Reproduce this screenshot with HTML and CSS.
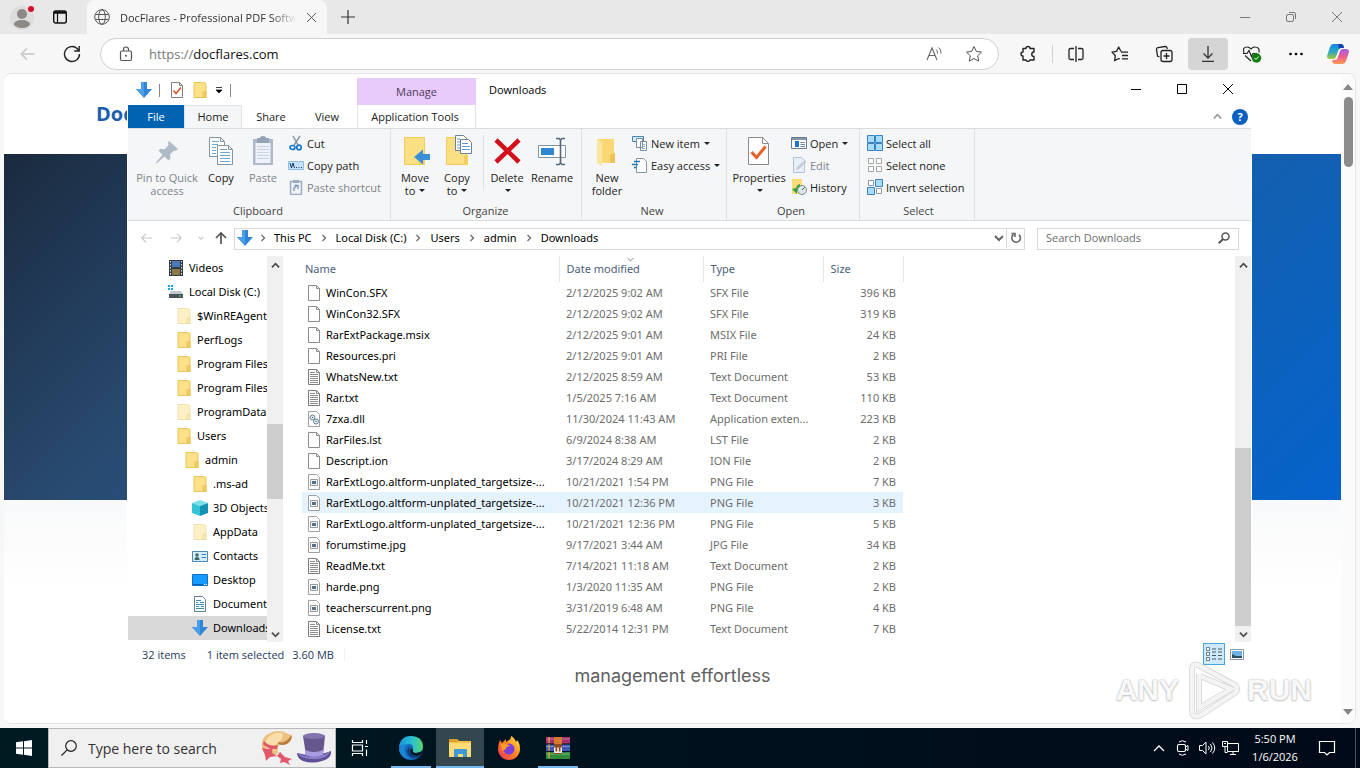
FILE: index.html
```html
<!DOCTYPE html>
<html lang="en">
<head>
    <meta charset="UTF-8">
    <title>Downloads</title>
    <link rel="stylesheet" href="styles.css">
</head>
<body>
    <!-- shared icons -->
    <svg class="sprite" aria-hidden="true">
        <symbol id="i-down" viewBox="0 0 16 16"><path d="M5 0h6v7h5l-8 9-8-9h5z" fill="#2f86d6"/><path d="M5 0h3v15L0 7h5z" fill="#4a9fe8"/></symbol>
        <symbol id="i-folder" viewBox="0 0 16 16"><path d="M2 .5h9l3 1v14H2z" fill="#fbe28a" stroke="#e8c65a"/><path d="M11 10l3-1v6.500h-3z" fill="#f3cf5c" stroke="#dcb545" stroke-width=".6"/></symbol>
        <symbol id="i-file" viewBox="0 0 16 16"><path d="M2.500 .5h8l3 3v12h-11z" fill="#fff" stroke="#8c8c8c"/><path d="M10.500 .5v3h3" fill="none" stroke="#8c8c8c"/></symbol>
        <symbol id="i-text" viewBox="0 0 16 16"><path d="M2.500 .5h8l3 3v12h-11z" fill="#fff" stroke="#7c7c7c"/><path d="M10.500 .5v3h3M4 3.500h5M4 5.500h8M4 7.500h8M4 9.500h8M4 11.500h8M4 13.500h8" fill="none" stroke="#8c8c8c"/></symbol>
        <symbol id="i-image" viewBox="0 0 16 16"><path d="M2.500 .5h8l3 3v12h-11z" fill="#fff" stroke="#a0a0a0"/><path d="M4.500 5.500h7v6h-7z" fill="#eef3fa" stroke="#9a9a9a"/><path d="M6 7h4v3H6z" fill="#59708a"/></symbol>
        <symbol id="i-dll" viewBox="0 0 16 16"><path d="M2.500 .5h8l3 3v12h-11z" fill="#fff" stroke="#a0a0a0"/><g fill="#dcecf2" stroke="#66828c"><circle cx="6.500" cy="6.500" r="2.500"/><circle cx="10" cy="10.500" r="2.500"/></g><path d="M6 6h1v1H6zM9.500 10h1v1h-1z" fill="#446"/></symbol>
        <symbol id="i-chev-up" viewBox="0 0 10 10"><path d="M1 7l4-4 4 4" fill="none" stroke="currentColor" stroke-width="2"/></symbol>
        <symbol id="i-chev-down" viewBox="0 0 10 10"><path d="M1 3l4 4 4-4" fill="none" stroke="currentColor" stroke-width="2"/></symbol>
        <symbol id="i-chev-right" viewBox="0 0 10 10"><path d="M3.500 2l3 3-3 3" fill="none" stroke="#6b6b6b" stroke-width="1.300"/></symbol>
        <symbol id="i-left" viewBox="0 0 16 16"><path d="M14 8H2M7 3L2 8l5 5" fill="none" stroke="currentColor" stroke-width="1.300"/></symbol>
        <symbol id="i-right" viewBox="0 0 16 16"><path d="M2 8h12M9 3l5 5-5 5" fill="none" stroke="currentColor" stroke-width="1.300"/></symbol>
        <symbol id="i-min" viewBox="0 0 10 10"><path d="M0 5.500h10" stroke="currentColor"/></symbol>
        <symbol id="i-close" viewBox="0 0 10 10"><path d="M0 0l10 10M10 0L0 10" stroke="currentColor"/></symbol>
        <symbol id="i-check-doc" viewBox="0 0 16 16"><path d="M2.500 .5h8l3 3v12h-11z" fill="#fff" stroke="#808080"/><path d="M10.500 .5v3h3" fill="none" stroke="#808080"/><path d="M4.500 8.500l2.500 3 5-6" fill="none" stroke="#d9532c" stroke-width="1.600"/></symbol>
    </svg>

    <main class="desktop">
        <section class="browser">
            <header class="tabbar">
                <button class="tab-btn profile" aria-label="Profile">
                    <svg width="28" height="28" viewBox="0 0 28 28"><circle cx="14" cy="15" r="12" fill="#dcdcdc"/><circle cx="14" cy="11" r="5" fill="#8d8986"/><ellipse cx="14" cy="21" rx="8" ry="4" fill="#8d8986"/><circle cx="23" cy="6" r="3" fill="#d60f26"/></svg>
                </button>
                <button class="tab-btn" aria-label="Tab actions">
                    <svg width="16" height="16" viewBox="0 0 16 16"><rect x="1.700" y="2" width="12.600" height="12" rx="2" fill="none" stroke="#111" stroke-width="1.400"/><path d="M2 3.500h12" stroke="#111" stroke-width="2.500"/><path d="M5.500 4v10" stroke="#111" stroke-width="1.200"/></svg>
                </button>
                <div class="tab">
                    <svg width="16" height="16" viewBox="0 0 16 16"><g fill="none" stroke="#555"><circle cx="8" cy="8" r="7.300"/><ellipse cx="8" cy="8" rx="3.300" ry="7.300"/><path d="M1.500 5.500h13M1.500 10.500h13"/></g></svg>
                    <span class="tab-title">DocFlares - Professional PDF Software</span>
                    <button class="tab-close" aria-label="Close tab"><svg width="9" height="9"><use href="#i-close"/></svg></button>
                </div>
                <button class="new-tab" aria-label="New tab"><svg width="14" height="14" viewBox="0 0 14 14"><path d="M7 0v14M0 7h14" stroke="#333" stroke-width="1.200"/></svg></button>
                <div class="win-controls muted">
                    <button aria-label="Minimize"><svg width="10" height="10"><use href="#i-min"/></svg></button>
                    <button aria-label="Restore"><svg width="10" height="10" viewBox="0 0 10 10"><rect x=".5" y="2.500" width="7" height="7" rx="1.500" fill="none" stroke="currentColor"/><path d="M3 .5h5q1.500 0 1.500 1.500v5" fill="none" stroke="currentColor"/></svg></button>
                    <button aria-label="Close"><svg width="10" height="10"><use href="#i-close"/></svg></button>
                </div>
            </header>
            <div class="toolbar">
                <button class="tool faint" aria-label="Back"><svg width="18" height="18"><use href="#i-left"/></svg></button>
                <button class="tool reload" aria-label="Refresh"><svg width="18" height="18" viewBox="0 0 18 18"><path d="M16.500 9a7.500 7.500 0 1 1-2.200-5.300L16 5.500M16.200 1v5h-5" fill="none" stroke="#222" stroke-width="1.400"/></svg></button>
                <div class="url-box">
                    <svg width="14" height="16" viewBox="0 0 14 16"><rect x="1.500" y="5" width="11" height="9.500" rx="1.500" fill="none" stroke="#555" stroke-width="1.200"/><path d="M4.500 5V3.500a2.500 2.500 0 0 1 5 0V5" fill="none" stroke="#555" stroke-width="1.200"/><circle cx="7" cy="9.700" r="1" fill="#555"/></svg>
                    <a class="url" href="https://docflares.com"><span>https://</span>docflares.com</a>
                    <button class="tool-in" aria-label="Read aloud"><svg width="17" height="16" viewBox="0 0 17 16"><path d="M1 14L6 2l5 12M3 9.500h6" fill="none" stroke="#666" stroke-width="1.100"/><path d="M10 3.500q1.800 1.200 1.500 4M12.500 1.500q3 2 2.500 6" fill="none" stroke="#666"/></svg></button>
                    <button class="tool-in" aria-label="Favorite"><svg width="18" height="18" viewBox="0 0 18 18"><path d="M9 1.500l2.300 4.900 5.200.7-3.800 3.700 1 5.300L9 13.500l-4.700 2.600 1-5.300L1.500 7.100l5.200-.7z" fill="none" stroke="#555" stroke-linejoin="round"/></svg></button>
                </div>
                <div class="tools">
                    <button class="tool" aria-label="Extensions"><svg width="18" height="18" viewBox="0 0 18 18"><path d="M4 3.500h3a2 2 0 0 1 4 0h4V7a2.200 2.200 0 0 0 0 4.500V15h-4.200a2 2 0 0 1-3.800 0H4v-4a2 2 0 0 1 0-4z" fill="none" stroke="#222" stroke-width="1.400" stroke-linejoin="round"/></svg></button>
                    <span class="tool-sep"></span>
                    <button class="tool" aria-label="Split screen"><svg width="18" height="18" viewBox="0 0 18 18"><path d="M7 3.500H3.500q-1.500 0-1.500 1.500v8q0 1.500 1.500 1.500H7M11 3.500h3.500Q16 3.500 16 5v8q0 1.500-1.500 1.500H11M9 1v16" fill="none" stroke="#222" stroke-width="1.300"/></svg></button>
                    <button class="tool" aria-label="Favorites"><svg width="18" height="18" viewBox="0 0 18 18"><path d="M10 6.500L7.700 2 5.600 6.400l-4.600.7 3.400 3.600-.9 5 4.200-2.200 1 .6M10 7.200h7M11 10.500h6M11 13.800h6" fill="none" stroke="#222" stroke-width="1.300" stroke-linejoin="round"/></svg></button>
                    <button class="tool" aria-label="Collections"><svg width="18" height="18" viewBox="0 0 18 18"><path d="M4.500 12L2.500 11 1.500 4.500Q1.300 3 3 2.700L10 1.500q1.700-.2 2 1.500l.2 1" fill="none" stroke="#222" stroke-width="1.300"/><rect x="6" y="5.500" width="11" height="11" rx="2" fill="#f7f7f7" stroke="#222" stroke-width="1.300"/><path d="M11.500 8v6M8.500 11h6" stroke="#222" stroke-width="1.300"/></svg></button>
                    <button class="tool active" aria-label="Downloads"><svg width="18" height="18" viewBox="0 0 18 18"><path d="M9 1v12M4.500 8.500L9 13l4.500-4.500M3 16.300h12" fill="none" stroke="#333" stroke-width="1.300"/></svg></button>
                    <button class="tool" aria-label="Browser essentials"><svg width="20" height="18" viewBox="0 0 20 18"><path d="M2 8Q0 2 5 2q2.500 0 4 2 1.500-2 4-2 5 0 4 5.500M3 10.500l6 5.500M1 8.500h4l2-3 2.500 6 1.500-3h4" fill="none" stroke="#222" stroke-width="1.200"/><circle cx="14.500" cy="13" r="4.700" fill="#107c10"/><path d="M12.500 13l1.500 1.500 2.700-3" fill="none" stroke="#fff"/></svg></button>
                    <button class="tool" aria-label="Settings and more"><svg width="16" height="16" viewBox="0 0 16 16"><circle cx="2.500" cy="8" r="1.300"/><circle cx="8" cy="8" r="1.300"/><circle cx="13.500" cy="8" r="1.300"/></svg></button>
                    <button class="tool copilot" aria-label="Copilot">
                        <svg width="24" height="24" viewBox="0 0 24 24"><defs><linearGradient id="cp1" x2="0" y2="1"><stop offset="0" stop-color="#1686e0"/><stop offset=".5" stop-color="#29a9c5"/><stop offset="1" stop-color="#a5c93a"/></linearGradient><linearGradient id="cp2" x2="0" y2="1"><stop offset="0" stop-color="#a75fe8"/><stop offset=".5" stop-color="#ea5c91"/><stop offset="1" stop-color="#ff9b55"/></linearGradient></defs><path d="M7 2h8q2 0 2.600 2L18 6h-3q-2 0-2.600 2L10 15q-.7 2-3 2H4q-3 0-3-3l3-9q1-3 3-3z" fill="url(#cp1)"/><path d="M17 22H9q-2 0-2.600-2L6 18h3q2 0 2.600-2L14 9q.7-2 3-2h3q3 0 3 3l-3 9q-1 3-3 3z" fill="url(#cp2)"/><path d="M12 2h3q2 0 2.600 2L18 6h-3q-1.500 0-2 1z" fill="#1741b0"/></svg>
                    </button>
                </div>
            </div>
            <div class="viewport">
                <div class="page">
                    <nav class="site-nav"><a href="#" class="logo">DocFlares</a></nav>
                    <div class="hero"></div>
                    <div class="features"><p>management effortless</p></div>
                </div>
                <div class="page-scroll">
                    <span class="tri-up"></span>
                    <span class="page-thumb"></span>
                    <span class="tri-down"></span>
                </div>
            </div>
        </section>

        <section class="explorer">
            <header class="titlebar">
                <div class="quick">
                    <svg width="16" height="16"><use href="#i-down"/></svg>
                    <i class="bar"></i>
                    <svg width="16" height="16"><use href="#i-check-doc"/></svg>
                    <svg width="16" height="16"><use href="#i-folder"/></svg>
                    <svg width="8" height="8" viewBox="0 0 8 8"><path d="M1 1.500h6M1 4h6L4 7z" stroke="#111" stroke-width=".8"/></svg>
                    <i class="bar"></i>
                </div>
                <div class="manage">Manage</div>
                <div class="title-rest">
                    <h1>Downloads</h1>
                    <div class="win-controls">
                        <button aria-label="Minimize"><svg width="10" height="10"><use href="#i-min"/></svg></button>
                        <button aria-label="Maximize"><svg width="10" height="10" viewBox="0 0 10 10"><path d="M.5 .5h9v9h-9z" fill="none" stroke="currentColor"/></svg></button>
                        <button aria-label="Close"><svg width="10" height="10"><use href="#i-close"/></svg></button>
                    </div>
                </div>
            </header>
            <div class="tabs">
                <button class="rtab file">File</button>
                <button class="rtab current">Home</button>
                <button class="rtab share">Share</button>
                <button class="rtab">View</button>
                <button class="rtab context">Application Tools</button>
                <div class="tabs-end">
                    <svg class="collapse" width="9" height="9"><use href="#i-chev-up"/></svg>
                    <button class="help" aria-label="Help">?</button>
                </div>
            </div>

            <div class="ribbon">
                <div class="group g-clip">
                    <div class="group-items">
                        <button class="big off w-pin">
                            <svg width="32" height="32" viewBox="0 0 32 32"><path d="M18 6l9 8-2 2-2-.500-4 4 .500 4-2 2-4-4-8 7-.700-.700 6.700-8-4-4 2-2 4 .500 4-4L17 8z" fill="#a5b1c1"/></svg>
                            <span>Pin to Quick access</span>
                        </button>
                        <button class="big w-copy">
                            <svg width="32" height="32" viewBox="0 0 32 32"><g fill="#fff" stroke="#8493a6"><path d="M4.500 2.500h11l4 4v15h-15z"/><path d="M12.500 10.500h11l4 4v15h-15z"/><path d="M15.500 2.500v4h4M23.500 10.500v4h4" fill="none"/></g><path d="M7 6.500h7M7 9.500h6M7 12.500h4M7 15.500h4M7 18.500h4M15 14.500h7M15 17.500h10M15 20.500h10M15 23.500h10M15 26.500h10" stroke="#6ba6d8"/></svg>
                            <span>Copy</span>
                        </button>
                        <button class="big off w-paste">
                            <svg width="32" height="32" viewBox="0 0 32 32"><path d="M6 4h20v26H6z" fill="#a3afc2"/><path d="M8.500 8h15v20h-15z" fill="#edf1f8"/><path d="M10 3h3q0-2 3-2t3 2h3v5H10z" fill="#8594aa"/><path d="M10 11.500h12M10 14.500h12M10 17.500h12M10 20.500h12M10 23.500h12" stroke="#c3cedf"/></svg>
                            <span>Paste</span>
                        </button>
                        <div class="stack">
                            <button><svg width="16" height="16" viewBox="0 0 16 16"><path d="M5 1l5 9M12 1L6 10" stroke="#8795a5" stroke-width="1.500"/><g fill="none" stroke="#1979c9" stroke-width="1.700"><ellipse cx="4.500" cy="12.500" rx="2.500" ry="2"/><ellipse cx="11" cy="12.500" rx="2.200" ry="2.300"/></g></svg>Cut</button>
                            <button><svg width="16" height="16" viewBox="0 0 16 16"><path d="M.5 4.500h15v8H.5z" fill="#c5e2fa" stroke="#91bde0"/><path d="M2 6l1.500 5L5 6l1.500 5M8 10.500h1M10.500 10.500h1M13 10.500h1" fill="none" stroke="#123c66"/></svg>Copy path</button>
                            <button class="off"><svg width="16" height="16" viewBox="0 0 16 16"><path d="M2.500 2.500h11v13h-11z" fill="#edf2f8" stroke="#8fa0b8" stroke-width="1.500"/><path d="M5 1h6v3H5z" fill="#8fa0b8"/><path d="M6 12V9l3-2.500M6.500 6.500H10V10" fill="none" stroke="#6781a5" stroke-width="1.300"/></svg>Paste shortcut</button>
                        </div>
                    </div>
                    <div class="group-name">Clipboard</div>
                </div>
                <div class="group g-org">
                    <div class="group-items">
                        <button class="big w-move">
                            <svg width="32" height="32" viewBox="0 0 32 32"><path d="M5.500 2.500h20v27h-20z" fill="#fbdf83" stroke="#efcb62"/><path d="M20 30v-8l6-2v10z" fill="#f3cd60"/><path d="M31 19v6h-7v4.500L15 22l9-7.500V19z" fill="#3a8fd6"/></svg>
                            <span>Move<br>to <b class="caret"></b></span>
                        </button>
                        <button class="big w-move">
                            <svg width="32" height="32" viewBox="0 0 32 32"><path d="M5.500 2.500h20v27h-20z" fill="#fbdf83" stroke="#efcb62"/><path d="M23 30V21l4-1v10z" fill="#f3cd60"/><g fill="#fff" stroke="#6f8098"><path d="M14.500 .5h8l3 3v12h-11z"/><path d="M19.500 4.500h8l3 3v11h-11z"/></g><path d="M16 4h3M16 7h3M16 10h3M16 13h3M21 8.500h6M21 11.500h8M21 14.500h8" stroke="#5e9bd2"/></svg>
                            <span>Copy<br>to <b class="caret"></b></span>
                        </button>
                        <i class="split"></i>
                        <button class="big w-del">
                            <svg width="32" height="32" viewBox="0 0 32 32"><path d="M5 5l23 22M28 5L5 27" stroke="#d2101b" stroke-width="4.500"/></svg>
                            <span>Delete<br><b class="caret"></b></span>
                        </button>
                        <button class="big w-ren">
                            <svg width="32" height="32" viewBox="0 0 32 32"><path d="M2.500 10.500h27v12h-27z" fill="#fff" stroke="#8094a8"/><path d="M5 13h13v7H5z" fill="#2e87d0"/><path d="M24.500 4v25M20 3.500h3l1.500 1.500L26 3.500h3M20 29.500h3l1.500-1.500 1.500 1.500h3" fill="none" stroke="#57677a" stroke-width="1.600"/></svg>
                            <span>Rename</span>
                        </button>
                    </div>
                    <div class="group-name">Organize</div>
                </div>
                <div class="group g-new">
                    <div class="group-items">
                        <button class="big w-new">
                            <svg width="32" height="32" viewBox="0 0 32 32"><path d="M6 4h17v24H6z" fill="#f8d774"/><path d="M6 4l5 3v24l-5-3z" fill="#fbe69f"/><path d="M19 20l5-2v10h-5z" fill="#efc353"/></svg>
                            <span>New folder</span>
                        </button>
                        <div class="stack">
                            <button><svg width="16" height="16" viewBox="0 0 16 16"><path d="M.5 1.500h11v5H.5z" fill="#d6ebfa" stroke="#4c83b4"/><path d="M4.500 3.500h6v9h-6zM8.500 6.500h6v9h-6z" fill="#fff" stroke="#7d8c9c"/><path d="M10 9.500h3M10 11.500h3M10 13.500h3" stroke="#79a7d2"/></svg>New item<b class="caret"></b></button>
                            <button><svg width="16" height="16" viewBox="0 0 16 16"><path d="M4.500 1.500h7l3 3v11h-10z" fill="#fff" stroke="#8795a5"/><path d="M2 4.500h6M0 7.500h6M2 10.500h3" stroke="#2778b8" stroke-width="1.500"/></svg>Easy access<b class="caret"></b></button>
                        </div>
                    </div>
                    <div class="group-name">New</div>
                </div>
                <div class="group g-open">
                    <div class="group-items">
                        <button class="big w-prop">
                            <svg width="32" height="32" viewBox="0 0 32 32"><path d="M5.500 2.500h14l6 6v21h-20z" fill="#fff" stroke="#8a8a8a"/><path d="M19.500 2.500v6h6" fill="none" stroke="#8a8a8a"/><path d="M8.500 17l5 5.500 9-11" fill="none" stroke="#e8602a" stroke-width="3"/></svg>
                            <span>Properties<br><b class="caret"></b></span>
                        </button>
                        <div class="stack">
                            <button><svg width="16" height="16" viewBox="0 0 16 16"><path d="M.5 2.500h15v11H.5z" fill="#fff" stroke="#6a7a8c"/><path d="M1 3h14v2H1z" fill="#8497aa"/><path d="M4 6h4v6H4z" fill="#1c74c4"/><path d="M9.500 7.500H14M9.500 9.500H14M9.500 11.500H14" stroke="#7088a0"/></svg>Open<b class="caret"></b></button>
                            <button class="off"><svg width="16" height="16" viewBox="0 0 16 16"><path d="M2.500 .5h8l3 3v12h-11z" fill="#e7eef8" stroke="#a9bad0"/><path d="M5 13l1-3 8-7 1.500 2L8 12z" fill="#b8c6d8"/></svg>Edit</button>
                            <button><svg width="16" height="16" viewBox="0 0 16 16"><path d="M1 0h10v15H1z" fill="#f9dc78"/><circle cx="11" cy="11" r="4.500" fill="#dde4ea" stroke="#7c8791"/><path d="M11 11l2.500-2.500" stroke="#555"/><path d="M9 5v3q-3 0-3 4v3L1 10l4-1q1-3.500 4-4z" fill="#38a338"/></svg>History</button>
                        </div>
                    </div>
                    <div class="group-name">Open</div>
                </div>
                <div class="group g-select">
                    <div class="group-items">
                        <div class="stack">
                            <button><svg width="16" height="16" viewBox="0 0 16 16"><path d="M.5 .5h7v7h-7zM8.500 .5h7v7h-7zM.5 8.500h7v7h-7zM8.500 8.500h7v7h-7z" fill="#a8dcff" stroke="#3983c2"/></svg>Select all</button>
                            <button><svg width="16" height="16" viewBox="0 0 16 16"><path d="M1.500 1.500h5v5h-5zM9.500 1.500h5v5h-5zM1.500 9.500h5v5h-5zM9.500 9.500h5v5h-5z" fill="#fff" stroke="#a5a5a5"/></svg>Select none</button>
                            <button><svg width="16" height="16" viewBox="0 0 16 16"><path d="M1.500 1.500h5v5h-5zM9.500 9.500h5v5h-5z" fill="#fff" stroke="#8a9aaa"/><path d="M8.500 .5h7v7h-7zM.5 8.500h7v7h-7z" fill="#a8dcff" stroke="#3983c2"/></svg>Invert selection</button>
                        </div>
                    </div>
                    <div class="group-name">Select</div>
                </div>
            </div>

            <div class="addressbar">
                <div class="nav-btns">
                    <button class="faint" aria-label="Back"><svg width="14" height="14"><use href="#i-left"/></svg></button>
                    <button class="faint" aria-label="Forward"><svg width="14" height="14"><use href="#i-right"/></svg></button>
                    <button class="faint recent" aria-label="Recent"><svg width="6" height="6"><use href="#i-chev-down"/></svg></button>
                    <button aria-label="Up"><svg width="14" height="14" viewBox="0 0 14 14"><path d="M7 13V2M2 7l5-5 5 5" fill="none" stroke="#555" stroke-width="1.700"/></svg></button>
                </div>
                <div class="path">
                    <svg width="16" height="16"><use href="#i-down"/></svg>
                    <svg class="sep first" width="10" height="10"><use href="#i-chev-right"/></svg>
                    <a href="#">This PC</a><svg class="sep" width="10" height="10"><use href="#i-chev-right"/></svg>
                    <a href="#">Local Disk (C:)</a><svg class="sep" width="10" height="10"><use href="#i-chev-right"/></svg>
                    <a href="#">Users</a><svg class="sep" width="10" height="10"><use href="#i-chev-right"/></svg>
                    <a href="#">admin</a><svg class="sep" width="10" height="10"><use href="#i-chev-right"/></svg>
                    <a href="#">Downloads</a>
                    <button class="drop" aria-label="Previous locations"><svg width="10" height="10"><use href="#i-chev-down"/></svg></button>
                    <button class="refresh" aria-label="Refresh"><svg width="12" height="12" viewBox="0 0 12 12"><path d="M3.500 2.500a4.300 4.300 0 1 0 5.500.2M1.500 1.500h3.500V5" fill="none" stroke="#666" stroke-width="1.600"/></svg></button>
                </div>
                <label class="search">
                    <input type="text" placeholder="Search Downloads" aria-label="Search Downloads">
                    <svg width="12" height="12" viewBox="0 0 12 12"><circle cx="7.500" cy="4.500" r="3.500" fill="none" stroke="#555" stroke-width="1.500"/><path d="M5 7L.8 11.200" stroke="#555" stroke-width="2"/></svg>
                </label>
            </div>

            <div class="panes">
                <nav class="tree">
                    <ul>
                        <li class="l1"><svg width="16" height="16" viewBox="0 0 16 16"><path d="M1 0h14v16H1z" fill="#333b45"/><path d="M4 1h8v6H4z" fill="#4b78b8"/><path d="M4 9h8v6H4z" fill="#8a7a45"/><path d="M2.500 1v15M13.500 1v15" stroke="#e5e5e5" stroke-dasharray="1.500 1.500"/></svg><a href="#">Videos</a></li>
                        <li class="l1"><svg width="16" height="16" viewBox="0 0 16 16"><path d="M0 1h2v2H0zM3 1h2v2H3zM0 4h2v2H0zM3 4h2v2H3z" fill="#18a9e0"/><path d="M3 7h10l2 3H1z" fill="#c3c7cb"/><path d="M1 10h14v4H1z" fill="#4b5259"/><path d="M11 11.500h2v1h-2z" fill="#5ce06a"/></svg><a href="#">Local Disk (C:)</a></li>
                        <li class="l2 hidden"><svg width="16" height="16"><use href="#i-folder"/></svg><a href="#">$WinREAgent</a></li>
                        <li class="l2"><svg width="16" height="16"><use href="#i-folder"/></svg><a href="#">PerfLogs</a></li>
                        <li class="l2"><svg width="16" height="16"><use href="#i-folder"/></svg><a href="#">Program Files</a></li>
                        <li class="l2"><svg width="16" height="16"><use href="#i-folder"/></svg><a href="#">Program Files (x86)</a></li>
                        <li class="l2 hidden"><svg width="16" height="16"><use href="#i-folder"/></svg><a href="#">ProgramData</a></li>
                        <li class="l2"><svg width="16" height="16"><use href="#i-folder"/></svg><a href="#">Users</a></li>
                        <li class="l3"><svg width="16" height="16"><use href="#i-folder"/></svg><a href="#">admin</a></li>
                        <li class="l4"><svg width="16" height="16"><use href="#i-folder"/></svg><a href="#">.ms-ad</a></li>
                        <li class="l4"><svg width="16" height="16" viewBox="0 0 16 16"><path d="M0 3l8-3 8 3-8 3z" fill="#7be0ea"/><path d="M0 3l8 3v10l-8-3z" fill="#35c3d6"/><path d="M16 3L8 6v10l8-3z" fill="#1593b5"/></svg><a href="#">3D Objects</a></li>
                        <li class="l4 hidden"><svg width="16" height="16"><use href="#i-folder"/></svg><a href="#">AppData</a></li>
                        <li class="l4"><svg width="16" height="16" viewBox="0 0 16 16"><path d="M.5 3.500h15v10H.5z" fill="#d5eefc" stroke="#4a88b5"/><circle cx="5" cy="7" r="1.700" fill="#3d6660"/><path d="M2.500 12q0-3 2.500-3t2.500 3z" fill="#3d6660"/><path d="M9.500 6.500H14M9.500 9.500H14" stroke="#3c7fb5"/></svg><a href="#">Contacts</a></li>
                        <li class="l4"><svg width="16" height="16" viewBox="0 0 16 16"><path d="M.5 2.500h15v11H.5z" fill="#149bfb" stroke="#0b72c4"/><path d="M1 12.500h10" stroke="#0b5ea5"/><path d="M12 12.500h3" stroke="#fff" stroke-dasharray="1 1"/></svg><a href="#">Desktop</a></li>
                        <li class="l4"><svg width="16" height="16" viewBox="0 0 16 16"><path d="M2.500 .5h8l3 3v12h-11z" fill="#fff" stroke="#5c7f92"/><path d="M4 4.500h5M4 6.500h2M8 6.500h4M4 8.500h8M4 10.500h3M9 10.500h3M4 12.500h8" stroke="#3c8ab5"/></svg><a href="#">Documents</a></li>
                        <li class="l4 selected"><svg width="16" height="16"><use href="#i-down"/></svg><a href="#">Downloads</a></li>
                    </ul>
                    <div class="scroll tree-scroll">
                        <svg width="9" height="9"><use href="#i-chev-up"/></svg>
                        <span class="thumb"></span>
                        <svg width="9" height="9"><use href="#i-chev-down"/></svg>
                    </div>
                </nav>
                <div class="files">
                    <table>
                        <colgroup><col class="c-name"><col class="c-date"><col class="c-type"><col class="c-size"></colgroup>
                        <thead>
                            <tr><th>Name</th><th class="sorted">Date modified<svg width="7" height="7" viewBox="0 0 10 10"><path d="M1 3l4 4 4-4" fill="none" stroke="#777" stroke-width="1.400"/></svg></th><th>Type</th><th>Size</th></tr>
                        </thead>
                        <tbody>
                            <tr><td><svg width="16" height="16"><use href="#i-file"/></svg>WinCon.SFX</td><td>2/12/2025 9:02 AM</td><td>SFX File</td><td>396 KB</td></tr>
                            <tr><td><svg width="16" height="16"><use href="#i-file"/></svg>WinCon32.SFX</td><td>2/12/2025 9:02 AM</td><td>SFX File</td><td>319 KB</td></tr>
                            <tr><td><svg width="16" height="16"><use href="#i-file"/></svg>RarExtPackage.msix</td><td>2/12/2025 9:01 AM</td><td>MSIX File</td><td>24 KB</td></tr>
                            <tr><td><svg width="16" height="16"><use href="#i-file"/></svg>Resources.pri</td><td>2/12/2025 9:01 AM</td><td>PRI File</td><td>2 KB</td></tr>
                            <tr><td><svg width="16" height="16"><use href="#i-text"/></svg>WhatsNew.txt</td><td>2/12/2025 8:59 AM</td><td>Text Document</td><td>53 KB</td></tr>
                            <tr><td><svg width="16" height="16"><use href="#i-text"/></svg>Rar.txt</td><td>1/5/2025 7:16 AM</td><td>Text Document</td><td>110 KB</td></tr>
                            <tr><td><svg width="16" height="16"><use href="#i-dll"/></svg>7zxa.dll</td><td>11/30/2024 11:43 AM</td><td>Application exten...</td><td>223 KB</td></tr>
                            <tr><td><svg width="16" height="16"><use href="#i-file"/></svg>RarFiles.lst</td><td>6/9/2024 8:38 AM</td><td>LST File</td><td>2 KB</td></tr>
                            <tr><td><svg width="16" height="16"><use href="#i-file"/></svg>Descript.ion</td><td>3/17/2024 8:29 AM</td><td>ION File</td><td>2 KB</td></tr>
                            <tr><td><svg width="16" height="16"><use href="#i-image"/></svg>RarExtLogo.altform-unplated_targetsize-...</td><td>10/21/2021 1:54 PM</td><td>PNG File</td><td>7 KB</td></tr>
                            <tr class="hover"><td><svg width="16" height="16"><use href="#i-image"/></svg>RarExtLogo.altform-unplated_targetsize-...</td><td>10/21/2021 12:36 PM</td><td>PNG File</td><td>3 KB</td></tr>
                            <tr><td><svg width="16" height="16"><use href="#i-image"/></svg>RarExtLogo.altform-unplated_targetsize-...</td><td>10/21/2021 12:36 PM</td><td>PNG File</td><td>5 KB</td></tr>
                            <tr><td><svg width="16" height="16"><use href="#i-image"/></svg>forumstime.jpg</td><td>9/17/2021 3:44 AM</td><td>JPG File</td><td>34 KB</td></tr>
                            <tr><td><svg width="16" height="16"><use href="#i-text"/></svg>ReadMe.txt</td><td>7/14/2021 11:18 AM</td><td>Text Document</td><td>2 KB</td></tr>
                            <tr><td><svg width="16" height="16"><use href="#i-image"/></svg>harde.png</td><td>1/3/2020 11:35 AM</td><td>PNG File</td><td>2 KB</td></tr>
                            <tr><td><svg width="16" height="16"><use href="#i-image"/></svg>teacherscurrent.png</td><td>3/31/2019 6:48 AM</td><td>PNG File</td><td>4 KB</td></tr>
                            <tr><td><svg width="16" height="16"><use href="#i-text"/></svg>License.txt</td><td>5/22/2014 12:31 PM</td><td>Text Document</td><td>7 KB</td></tr>
                        </tbody>
                    </table>
                </div>
                <div class="scroll files-scroll">
                    <svg width="9" height="9"><use href="#i-chev-up"/></svg>
                    <span class="thumb"></span>
                    <svg width="9" height="9"><use href="#i-chev-down"/></svg>
                </div>
            </div>

            <footer class="status">
                <span class="count">32 items</span>
                <span>1 item selected</span>
                <span class="size">3.60 MB</span>
                <div class="views">
                    <button class="view on" aria-label="Details"><svg width="18" height="16" viewBox="0 0 18 16"><path d="M1.500 1.500h3v3h-3zM1.500 6.500h3v3h-3zM1.500 11.500h3v3h-3z" fill="#fff" stroke="#6d7f8f"/><path d="M7 3h4M13 3h4M7 6h4M13 6h4M7 9.500h4M13 9.500h4M7 13h4M13 13h4" stroke="#44586b"/></svg></button>
                    <button class="view" aria-label="Large icons"><svg width="14" height="11" viewBox="0 0 14 11"><path d="M.5 .5h13v10H.5z" fill="#fff" stroke="#8a97a3"/><path d="M2 2h10v7H2z" fill="#6bb2e2"/><path d="M2 9V5l4 2 6 0v2z" fill="#27506e"/></svg></button>
                </div>
            </footer>
        </section>

        <div class="watermark">
            <span>ANY</span>
            <svg width="56" height="60" viewBox="0 0 56 60"><path d="M7 8v44M15 16L46 29 14 48V14M7 8q1-5 6-3l37 20q4 4 0 8L16 55q-8 4-9-3" fill="none" stroke="#dcdcdc" stroke-width="6"/><path d="M7 8v44M15 16L46 29 14 48V14M7 8q1-5 6-3l37 20q4 4 0 8L16 55q-8 4-9-3" fill="none" stroke="#f4f4f4" stroke-width="4"/></svg>
            <span>RUN</span>
        </div>
    </main>

    <footer class="taskbar">
        <button class="start" aria-label="Start"><svg width="16" height="16" viewBox="0 0 16 16"><path d="M0 2.300L7 1.300V7.500H0zM8 1.200L16 0v7.500H8zM0 8.500h7v6.200L0 13.700zM8 8.500h8V16l-8-1.200z" fill="#fff"/></svg></button>
        <label class="task-search">
            <svg width="16" height="16" viewBox="0 0 16 16"><circle cx="10" cy="6" r="5.300" fill="none" stroke="#222" stroke-width="1.200"/><path d="M6.200 9.800L.5 15.500" stroke="#222" stroke-width="1.200"/></svg>
            <input type="text" placeholder="Type here to search" aria-label="Type here to search">
            <svg width="72" height="36" viewBox="0 0 72 36">
                <path d="M5 23Q-1 10 9 4 20-2 29 4q5 0 2 6-4 6-11 4-2 5-1 9-6 6-14 0z" fill="#ecc07e"/>
                <path d="M7 20Q4 10 12 5q7-4 12-1 0 6-6 9-3 4-2 8z" fill="#f9dfac"/>
                <path d="M20 12q6 2 11-5l2-2q0 6-5 9-5 2-9 0z" fill="#b97b3c"/>
                <path d="M5 11q5 6 14 4l-1 4Q9 20 4 14zM3 18l7 1 4-2-1 6 5 3-7 1-4 4-1-6zM21 22l5 5 7 2-4 2 2 4-6-3-4 1 1-4-4-3z" fill="#e0586a"/>
                <path d="M44 6q11-5 22 0l-2 19H47z" fill="#66588f"/>
                <ellipse cx="55" cy="6" rx="11" ry="3" fill="#8474ad"/>
                <path d="M38 23q17 5 34-2 1 7-9 10-10 3-19 0-6-3-6-8z" fill="#5f4f95"/>
                <path d="M46 20q9 4 18 0v5q-9 4-18 0z" fill="#a99be0"/>
                <path d="M38 23q17 9 34-2-6 9-17 8-12 0-17-6z" fill="#8b7fc8"/>
            </svg>
        </label>
        <button class="task task-view" aria-label="Task view"><svg width="18" height="16" viewBox="0 0 18 16"><path d="M1.500 0v2.500h10V0M1.500 16v-2.500h10V16M1.500 5h10v6h-10zM15.500 0v4M15.500 9.500V16M14 6.500h3" fill="none" stroke="#fff" stroke-width="1.200"/></svg></button>
        <button class="task open" aria-label="Edge">
            <svg width="26" height="26" viewBox="0 0 26 26"><defs><linearGradient id="ed" x2="1"><stop offset="0" stop-color="#1b93dc"/><stop offset=".55" stop-color="#2ac1d2"/><stop offset="1" stop-color="#59d66a"/></linearGradient></defs><circle cx="13" cy="13" r="12" fill="#1568b8"/><path d="M1 13Q2 1 13 1q11 0 12 10 0 7-7 7-5 0-3-4 1-5-5-5-6 0-9 4z" fill="url(#ed)"/><path d="M7 12q-2 9 6 12-9 1-12-9 2-5 6-6 2 0 4 1-3 0-4 2z" fill="#1b86d6"/><path d="M12 12q-3 8 11 7-2 3-5 4-8 0-9-6 0-4 3-5z" fill="#0b3f7d"/><path d="M15 14q-1 4 3 4 4 0 7-3-1 3-3 5-8 2-10-4 0-3 3-2z" fill="#001720"/></svg>
        </button>
        <button class="task open current-task" aria-label="File Explorer">
            <svg width="24" height="22" viewBox="0 0 24 22"><path d="M1 2h8l2 2h12v16H1z" fill="#f6c14b"/><path d="M1 6h22v14H1z" fill="#fddb77"/><path d="M1 2h8l1 3H1z" fill="#e19c2b"/><path d="M6 20v-7q0-1 1-1h11q1 0 1 1v7h-4v-3h-5v3z" fill="#3f9bd8"/></svg>
        </button>
        <button class="task" aria-label="Firefox">
            <svg width="26" height="26" viewBox="0 0 26 26"><defs><linearGradient id="ff" x1="1" x2="0" y2="1"><stop offset="0" stop-color="#fff14f"/><stop offset=".45" stop-color="#ff8a1e"/><stop offset="1" stop-color="#f52a62"/></linearGradient></defs><path d="M4 5l2 3 4-4v3l3-2q2-1 2-4 3 1 5 6l1-2q3 3 3 9a11 11 0 0 1-22 0q0-5 2-9z" fill="url(#ff)"/><circle cx="13" cy="14" r="5.500" fill="#7b3fe0"/><path d="M5 9q6-1 9 2-4 0-4 3l-4 2z" fill="#ff9c22"/></svg>
        </button>
        <button class="task open" aria-label="WinRAR">
            <svg width="26" height="24" viewBox="0 0 26 24"><path d="M1 1h24v6.500H1z" fill="#a72f6e"/><path d="M1 8.500h24v6.500H1z" fill="#3d57b5"/><path d="M1 16h24v7H1z" fill="#2f8c3b"/><path d="M1 3h24M1 10.500h24M1 18h24" stroke="#fff" stroke-opacity=".35"/><path d="M4 1v22" stroke="#d9a33c" stroke-width="1.500" stroke-dasharray="6 1.500"/><path d="M9 1h8v17H9z" fill="#8e4a25"/><path d="M9 1h8v7H9z" fill="#d87a2b"/><path d="M9 11.500h1.500v4h1.700v-4h1.600v4h1.700v-4H17v5.500H9z" fill="#eee"/></svg>
        </button>
        <div class="tray">
            <svg width="18" height="14" viewBox="0 0 14 14"><path d="M2 10l5-5 5 5" fill="none" stroke="#fff" stroke-width="1.300"/></svg>
            <svg width="18" height="16" viewBox="0 0 14 16"><rect x="1.500" y="4.500" width="8" height="7" rx="1.500" fill="none" stroke="#fff" stroke-width="1.200"/><path d="M9.500 7l2.500-1.500v5L9.500 9M3 2q3-2.500 7 0M3 14q3 2.500 7 0" fill="none" stroke="#fff"/></svg>
            <svg width="18" height="16" viewBox="0 0 18 16"><path d="M1.500 5.500h3L8 2v12l-3.500-3.500h-3zM10.500 6q1.500 2 0 4M12.500 4q3 4 0 8M14.500 2.500q4.500 5.500 0 11" fill="none" stroke="#fff"/></svg>
            <svg width="18" height="16" viewBox="0 0 18 16"><path d="M5.500 3.500h11v8h-11zM11 11.500v3M8 14.500h6M.5 1.500h5v5h-5zM3 6.500v6h2.500M2 3.500h2" fill="none" stroke="#fff"/></svg>
            <div class="clock"><span>5:50 PM</span><span>1/6/2026</span></div>
            <button class="notes" aria-label="Notifications"><svg width="18" height="18" viewBox="0 0 18 18"><path d="M1.500 2.500h15v11h-5L9 16l-2.500-2.500h-5z" fill="none" stroke="#fff" stroke-width="1.200"/></svg></button>
        </div>
    </footer>
</body>
</html>
```
FILE: styles.css
```css
* {
    box-sizing: border-box;
}
body {
    margin: 0;
    height: 100vh;
    display: flex;
    flex-direction: column;
    overflow: hidden;
    font-family: "Open Sans", "Noto Sans", sans-serif;
    font-size: 11px;
    color: #000;
}
button {
    border: none;
    background: none;
    padding: 0;
    margin: 0;
    font: inherit;
    color: inherit;
    display: flex;
    align-items: center;
    justify-content: center;
}
input {
    border: none;
    background: none;
    padding: 0;
    font: inherit;
    outline: none;
    min-width: 0;
}
a {
    color: inherit;
    text-decoration: none;
}
svg {
    flex: none;
}
.sprite {
    position: absolute;
    width: 0;
    height: 0;
}
.desktop {
    position: relative;
    flex: 1;
    display: flex;
    min-height: 0;
}

/* browser */
.browser {
    flex: 1;
    display: flex;
    flex-direction: column;
    background: #f7f7f7;
}
.tabbar {
    display: flex;
    height: 34px;
    background: #e8e8e8;
}
.tab-btn {
    width: 32px;
}
.profile {
    width: 44px;
}
.tab {
    display: flex;
    align-items: center;
    gap: 10px;
    width: 240px;
    margin-left: 11px;
    padding: 0 11px 0 7px;
    border-radius: 8px 8px 0 0;
    background: #f7f7f7;
}
.tab-title {
    flex: 1;
    overflow: hidden;
    white-space: nowrap;
    color: #333;
    mask-image: linear-gradient(90deg, #000 85%, transparent);
}
.tab-close {
    color: #444;
}
.new-tab {
    width: 42px;
}
.win-controls {
    display: flex;
    margin-left: auto;
}
.win-controls button {
    width: 46px;
}
.muted {
    color: #777;
}
.toolbar {
    display: flex;
    align-items: center;
    height: 39px;
    padding: 0 2px 0 8px;
}
.tool {
    width: 40px;
    height: 32px;
}
.faint {
    color: #c8c8c8;
}
.reload {
    width: 48px;
    margin-right: 4px;
}
.copilot {
    margin-left: -2px;
}
.active {
    background: #d5d5d5;
    border-radius: 4px;
}
.url-box {
    flex: 1;
    display: flex;
    align-items: center;
    gap: 16px;
    height: 32px;
    padding: 0 12px 0 18px;
    border: 1px solid #cfcfcf;
    border-radius: 16px;
    background: #fff;
}
.url {
    flex: 1;
    font-size: 13px;
    color: #111;
}
.url span {
    color: #777;
}
.tool-in {
    width: 24px;
}
.tools {
    display: flex;
    align-items: center;
    gap: 4px;
    margin-left: 9px;
}
.tool-sep {
    width: 1px;
    height: 18px;
    margin-right: -1px;
    background: #d0d0d0;
}
.viewport {
    flex: 1;
    display: flex;
    margin: 0 4px 4px;
    border: 1px solid #e4e4e4;
    border-width: 1px 1px 1px 0;
    border-radius: 8px;
    overflow: hidden;
    background: #fff;
}
.page {
    flex: 1;
    display: flex;
    flex-direction: column;
}
.site-nav {
    height: 80px;
    padding: 26px 0 0 92px;
}
.logo {
    font-size: 20px;
    font-weight: 700;
    color: #1a5fb0;
}
.hero {
    height: 346px;
    background: linear-gradient(135deg, #1a2a3e 0%, #294b72 24%, #1a5ba5 65%, #1060b4 80%, #0563cc 100%);
}
.features {
    flex: 1;
    padding: 164px 0 0;
    background: linear-gradient(#f8f9fa, #fff 92px);
}
.features p {
    margin: 0;
    text-align: center;
    font: 18px/24px Inter, sans-serif;
    color: #5f5f5f;
}
.page-scroll {
    display: flex;
    flex-direction: column;
    align-items: center;
    width: 14px;
    padding: 10px 0 8px;
    background: #fbfbfb;
}
.tri-up, .tri-down {
    border: 5px solid transparent;
}
.tri-up {
    border-top: 0;
    border-bottom: 6px solid #858585;
}
.tri-down {
    margin-top: auto;
    border-bottom: 0;
    border-top: 6px solid #858585;
}
.page-thumb {
    width: 9px;
    height: 70px;
    margin-top: 7px;
    border-radius: 5px;
    background: #8b8b8b;
}

/* explorer window */
.explorer {
    position: absolute;
    left: 127px;
    right: 108px;
    top: 77px;
    bottom: 60px;
    display: flex;
    flex-direction: column;
    border: 1px solid #fff;
    border-width: 0 1px;
    background: #fff;
    cursor: default;
}
.titlebar {
    display: flex;
    height: 28px;
}
.quick {
    display: flex;
    align-items: center;
    gap: 7px;
    width: 229px;
    padding: 0 0 2px 8px;
}
.bar {
    width: 1px;
    height: 13px;
    margin-right: 2px;
    background: #888;
}
.manage {
    display: flex;
    align-items: center;
    justify-content: center;
    width: 119px;
    margin-top: 1px;
    background: #e9cbfb;
    color: #4d3a5c;
}
.title-rest {
    flex: 1;
    display: flex;
}
.title-rest h1 {
    margin: 0 0 0 13px;
    font-size: 11px;
    font-weight: 400;
    line-height: 26px;
}
.title-rest button {
    height: 24px;
}
.tabs {
    display: flex;
    height: 23px;
}
.rtab {
    width: 54px;
    color: #222;
}
.file {
    width: 56px;
    background: #0063b1;
    color: #fff;
}
.current {
    width: 58px;
    padding-bottom: 1px;
    background: #f5f6f7;
    border: 1px solid #e2e3e4;
    border-bottom: 0;
}
.share {
    width: 58px;
}
.context {
    width: 119px;
    margin-left: 3px;
    padding-right: 3px;
    border: 1px solid #e6dcec;
    border-width: 0 1px;
}
.tabs-end {
    display: flex;
    align-items: center;
    gap: 10px;
    margin-left: auto;
    padding-right: 3px;
    color: #999;
}
.help {
    width: 16px;
    height: 16px;
    border-radius: 8px;
    background: #0a5fc0;
    color: #fff;
    font-weight: 700;
}
.ribbon {
    display: flex;
    height: 93px;
    border: 1px solid #dadbdc;
    border-width: 1px 0;
    background: #f5f6f7;
}
.group {
    display: flex;
    flex-direction: column;
    justify-content: space-between;
    padding: 3px 0 2px;
    border-right: 1px solid #e0e1e2;
    color: #222;
}
.group-items {
    display: flex;
    align-items: flex-start;
}
.group-name {
    padding-right: 4px;
    text-align: center;
    line-height: 14px;
    color: #444;
}
.g-clip {
    width: 263px;
    padding-left: 2px;
}
.g-org {
    width: 191px;
    padding-left: 3px;
}
.g-new {
    width: 145px;
}
.g-open {
    width: 133px;
}
.g-select {
    width: 115px;
    padding-left: 7px;
}
.big {
    flex-direction: column;
    gap: 4px;
    padding-top: 3px;
    line-height: 13px;
    text-align: center;
}
.big span {
    display: block;
}
.w-pin {
    width: 74px;
}
.w-copy {
    width: 34px;
}
.w-paste {
    width: 50px;
}
.w-move {
    width: 42px;
}
.w-del {
    width: 46px;
}
.w-ren {
    width: 44px;
}
.w-new {
    width: 50px;
}
.w-prop {
    width: 64px;
}
.split {
    width: 1px;
    height: 56px;
    margin: 3px 0 0 5px;
    background: #e0e1e2;
}
.off {
    color: #7d828b;
}
.off svg {
    opacity: 0.85;
}
.caret {
    display: inline-block;
    margin-left: 1px;
    border: 3px solid transparent;
    border-top: 3px solid #222;
    border-bottom: 0;
    vertical-align: 3px;
}
.stack {
    display: flex;
    flex-direction: column;
}
.stack button {
    justify-content: flex-start;
    gap: 3px;
    height: 22px;
    white-space: nowrap;
}

/* address row */
.addressbar {
    display: flex;
    align-items: center;
    height: 35px;
    padding-right: 12px;
}
.nav-btns {
    display: flex;
    align-items: center;
    width: 106px;
    padding: 0 0 2px 12px;
    gap: 15px;
}
.nav-btns .recent {
    margin-right: -5px;
}
.path {
    flex: 1;
    display: flex;
    align-items: center;
    height: 22px;
    padding: 0 0 2px 2px;
    border: 1px solid #d9d9d9;
    font-family: "Noto Sans", sans-serif;
}
.sep {
    margin: 0 7px;
}
.first {
    margin: 0 6px 0 5px;
}
.path .drop {
    margin-left: auto;
    width: 14px;
    color: #666;
}
.refresh {
    height: 20px;
    width: 18px;
    border-left: 1px solid #d9d9d9;
}
.search {
    display: flex;
    align-items: center;
    width: 202px;
    height: 22px;
    margin-left: 12px;
    padding: 0 8px 2px;
    border: 1px solid #d9d9d9;
}
.search input {
    flex: 1;
}
.search input::placeholder {
    color: #6d6d6d;
}

/* panes */
.panes {
    flex: 1;
    display: flex;
    min-height: 0;
    font-family: "Noto Sans", sans-serif;
}
.tree {
    display: flex;
    width: 155px;
}
.tree ul {
    flex: 1;
    margin: 0;
    padding: 0;
    list-style: none;
    overflow: hidden;
}
.tree li {
    display: flex;
    align-items: center;
    gap: 5px;
    height: 24px;
    padding-bottom: 1px;
    white-space: nowrap;
}
.l1 {
    padding-left: 40px;
}
.l2 {
    padding-left: 48px;
}
.l3 {
    padding-left: 56px;
}
.l4 {
    padding-left: 64px;
}
.hidden svg {
    opacity: 0.5;
}
.selected {
    background: #d9d9d9;
}
.scroll {
    display: flex;
    flex-direction: column;
    align-items: center;
    width: 16px;
    padding: 5px 0 3px;
    background: #f0f0f0;
    color: #505050;
}
.thumb {
    width: 100%;
    background: #cdcdcd;
}
.tree-scroll .thumb {
    height: 75px;
    margin: auto 0 131px;
}
.files-scroll .thumb {
    height: 178px;
    margin: auto 0 4px;
}
.files {
    flex: 1;
    padding-left: 19px;
}
table {
    width: 601px;
    border-collapse: collapse;
    table-layout: fixed;
}
.c-name {
    width: 257px;
}
.c-date {
    width: 144px;
}
.c-type {
    width: 120px;
}
.c-size {
    width: 80px;
}
th {
    position: relative;
    height: 26px;
    padding: 0 7px 2px;
    border-right: 1px solid #e5e5e5;
    text-align: left;
    font-weight: 400;
    color: #4c607a;
}
th:first-child {
    padding-left: 3px;
}
.sorted svg {
    position: absolute;
    top: 0;
    left: calc(50% - 4px);
}
td {
    height: 21px;
    padding: 0 7px;
    line-height: 20px;
    color: #6d6d6d;
    white-space: nowrap;
}
td:first-child {
    padding: 0 0 0 4px;
    color: #000;
}
td:last-child {
    text-align: right;
}
td svg {
    margin-right: 4px;
    vertical-align: -4px;
}
.hover {
    background: #e5f3ff;
}
.status {
    display: flex;
    align-items: center;
    height: 26px;
    padding: 0 3px 2px 14px;
    color: #1e395b;
}
.count {
    margin-right: 21px;
}
.size {
    margin-left: 8px;
    padding-right: 10px;
    border-right: 1px solid #f0f0f0;
}
.views {
    display: flex;
    gap: 1px;
    margin-left: auto;
}
.view {
    width: 22px;
    height: 22px;
}
.on {
    border: 1px solid #4ba4d4;
    background: #cdeafc;
}
.watermark {
    position: absolute;
    right: 48px;
    bottom: 8px;
    display: flex;
    align-items: center;
    gap: 6px;
    font-family: "Liberation Sans Narrow", "Liberation Sans", sans-serif;
    font-size: 30px;
    font-weight: 700;
    color: #f8f8f8;
    text-shadow: 0 0 2px #aaa, 0 1px 2px #ccc;
}

/* taskbar */
.taskbar {
    display: flex;
    height: 40px;
    background: linear-gradient(90deg, #001b22, #00101c 60%, #000a18);
    color: #fff;
}
.start {
    width: 48px;
}
.task-search {
    display: flex;
    align-items: center;
    gap: 11px;
    width: 288px;
    padding: 0 4px 0 12px;
    border: 1px solid #b8b8b8;
    background: #f0f0f0;
}
.task-search input {
    flex: 1;
    font-size: 14px;
}
.task-search input::placeholder {
    color: #333;
}
.task {
    width: 48px;
    margin-right: 1px;
}
.task-view {
    margin-right: 3px;
}
.open {
    background: linear-gradient(#76b9ed, #76b9ed) bottom / 40px 2px no-repeat;
}
.current-task {
    background: linear-gradient(#76b9ed, #76b9ed) bottom / 48px 2px no-repeat #35474e;
}
.tray {
    display: flex;
    align-items: center;
    gap: 6px;
    margin-left: auto;
    padding-right: 4px;
}
.clock {
    display: flex;
    flex-direction: column;
    align-items: center;
    width: 54px;
    margin-left: 2px;
    padding-bottom: 1px;
    line-height: 18px;
}
.notes {
    align-self: stretch;
    width: 48px;
    padding-right: 10px;
    border-right: 1px solid #4a545c;
}
```
